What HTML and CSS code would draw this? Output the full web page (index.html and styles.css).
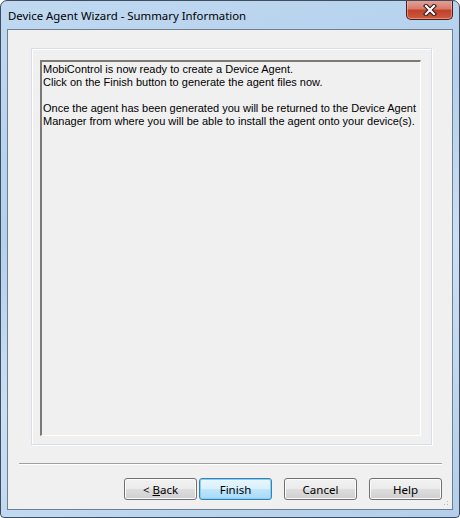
FILE: index.html
```html
<!DOCTYPE html>
<html lang="en">
<head>
    <meta charset="UTF-8">
    <title>Device Agent Wizard - Summary Information</title>
    <link rel="stylesheet" href="styles.css">
</head>
<body>
    <div class="window">
        <div class="titlebar">
            <span class="title">Device Agent Wizard - Summary Information</span>
            <button class="close-btn" title="Close">
                <svg width="16" height="12" viewBox="0 0 16 12">
                    <path d="M4 2 L12 10 M12 2 L4 10" stroke="#2a1414" stroke-width="4.2" stroke-linecap="square"/>
                    <path d="M4 2 L12 10 M12 2 L4 10" stroke="#fff" stroke-width="2.2" stroke-linecap="square"/>
                </svg>
            </button>
        </div>

        <div class="client">
            <div class="group">
                <div class="summary-box">
                    MobiControl is now ready to create a Device Agent.<br>
                    Click on the Finish button to generate the agent files now.<br>
                    <br>
                    Once the agent has been generated you will be returned to the Device Agent<br>
                    Manager from where you will be able to install the agent onto your device(s).
                </div>
            </div>

            <div class="separator"></div>

            <div class="button-row">
                <button class="btn">&lt; <u>B</u>ack</button>
                <button class="btn btn-default">Finish</button>
                <button class="btn btn-gap">Cancel</button>
                <button class="btn btn-gap">Help</button>
            </div>
            <div class="grip"></div>
        </div>
    </div>
</body>
</html>
```

FILE: styles.css
```css
* {
    box-sizing: border-box;
}
html, body {
    margin: 0;
    padding: 0;
    background: #fff;
}
.window {
    width: 460px;
    height: 518px;
    border: 1px solid #3f4d5e;
    border-radius: 7px 7px 4px 4px;
    background: linear-gradient(160deg, #c0d9f1 0%, #b4d0ec 35%, #cadff4 60%, #b3cfeb 100%);
    display: flex;
    flex-direction: column;
    position: relative;
    overflow: hidden;
}
.titlebar {
    height: 28px;
    display: flex;
    align-items: flex-start;
    justify-content: space-between;
}
.title {
    font-family: "Noto Sans", sans-serif;
    font-size: 11.4px;
    color: #000;
    margin: 7px 0 0 7px;
}
.close-btn {
    width: 47px;
    height: 20px;
    margin: -1px 6px 0 0;
    padding: 0;
    border: 1px solid #4a1d19;
    border-top: none;
    border-radius: 0 0 5px 5px;
    background: linear-gradient(#e4a59a 0%, #d87c6d 45%, #c2412c 55%, #cc5a3e 100%);
    box-shadow: inset 0 0 0 1px rgba(255, 200, 190, 0.5);
    display: flex;
    align-items: center;
    justify-content: center;
}
.client {
    flex: 1;
    margin: 0 6px 7px 6px;
    border: 1px solid #6e7f92;
    background: #f0f0f0;
    display: flex;
    flex-direction: column;
    position: relative;
}
.group {
    margin: 18px 20px 0 23px;
    height: 397px;
    border: 1px solid #d5dfe5;
    box-shadow: inset 1px 1px 0 #fff, 1px 1px 0 #fff;
    padding: 11px 10px 0 8px;
}
.summary-box {
    height: 376px;
    border-top: 2px solid #7a7a7a;
    border-left: 2px solid #7a7a7a;
    border-right: 1px solid #fff;
    border-bottom: 1px solid #fff;
    padding: 1px 0 0 1px;
    font-family: "Liberation Sans", Arial, sans-serif;
    font-size: 11px;
    line-height: 13px;
    color: #000;
}
.separator {
    margin: 18px 10px 0 11px;
    border-top: 1px solid #a0a0a0;
    border-bottom: 1px solid #fff;
}
.button-row {
    display: flex;
    justify-content: flex-end;
    margin: 13px 10px 0 0;
}
.btn {
    width: 73px;
    height: 22px;
    margin-left: 2px;
    padding: 0;
    border: 1px solid #707070;
    border-radius: 3px;
    background: linear-gradient(#f2f2f2 0%, #ebebeb 48%, #dddddd 52%, #cfcfcf 100%);
    box-shadow: inset 0 0 0 1px #fcfcfc;
    font-family: "Noto Sans", sans-serif;
    font-size: 11.5px;
    color: #000;
}
.btn-gap {
    margin-left: 12px;
}
.btn-default {
    border-color: #3c7fb1;
    background: linear-gradient(#eaf6fd 0%, #d9f0fc 48%, #bee6fd 52%, #a7d9f5 100%);
    box-shadow: inset 0 0 0 1px #7fd1f6;
}
.grip {
    position: absolute;
    right: 2px;
    bottom: 2px;
    width: 10px;
    height: 10px;
    background:
        radial-gradient(circle, #b8b8b8 0.8px, transparent 1px) 0 0 / 3px 3px;
    clip-path: polygon(100% 0, 100% 100%, 0 100%);
}
```
